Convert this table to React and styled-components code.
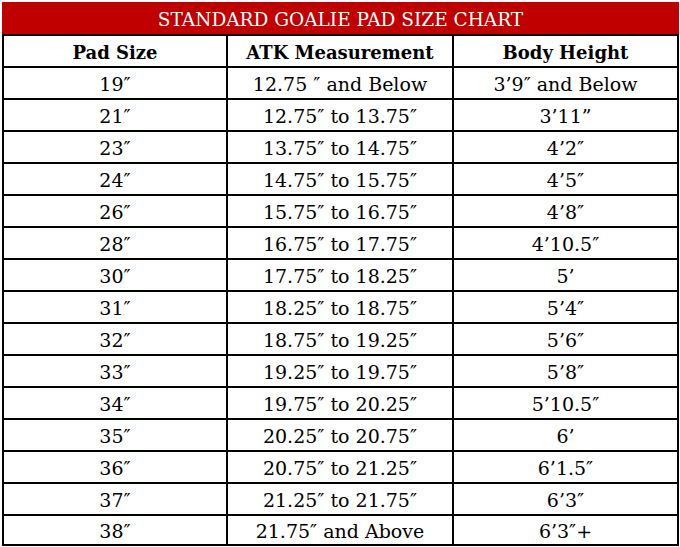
import React from "react";
import styled, { createGlobalStyle } from "styled-components";

const Global = createGlobalStyle`
  html, body { margin: 0; padding: 0; background: #fff; }
  body { font-family: "DejaVu Serif", "Liberation Serif", serif; color: #000; }
`;

const Page = styled.div`
  padding: 2px 0 0 2px;
`;

const Chart = styled.div`
  width: 677px;
`;

const TitleBar = styled.div`
  height: 32px;
  background: #c00000;
  color: #fff;
  display: flex;
  align-items: center;
  justify-content: center;
  font-size: 18.5px;
  padding-top: 2px;
  box-sizing: border-box;
`;

const Grid = styled.div`
  display: grid;
  grid-template-columns: 222px 224px 223px;
  column-gap: 2px;
  row-gap: 2px;
  background: #000;
  border: 2px solid #000;
`;

const Cell = styled.div`
  background: #fff;
  height: ${(p) => (p.$last ? 28 : 30)}px;
  display: flex;
  align-items: center;
  justify-content: center;
  font-size: ${(p) => (p.$head ? 18 : 19)}px;
  font-weight: ${(p) => (p.$head ? 700 : 400)};
  padding-top: 2px;
  box-sizing: border-box;
  white-space: nowrap;
`;

const rows = [
  ["19″", "12.75 ″ and Below", "3’9″ and Below"],
  ["21″", "12.75″ to 13.75″", "3’11”"],
  ["23″", "13.75″ to 14.75″", "4’2″"],
  ["24″", "14.75″ to 15.75″", "4’5″"],
  ["26″", "15.75″ to 16.75″", "4’8″"],
  ["28″", "16.75″ to 17.75″", "4’10.5″"],
  ["30″", "17.75″ to 18.25″", "5’"],
  ["31″", "18.25″ to 18.75″", "5’4″"],
  ["32″", "18.75″ to 19.25″", "5’6″"],
  ["33″", "19.25″ to 19.75″", "5’8″"],
  ["34″", "19.75″ to 20.25″", "5’10.5″"],
  ["35″", "20.25″ to 20.75″", "6’"],
  ["36″", "20.75″ to 21.25″", "6’1.5″"],
  ["37″", "21.25″ to 21.75″", "6’3″"],
  ["38″", "21.75″ and Above", "6’3″+"],
];

export default function App() {
  return (
    <Page>
      <Global />
      <Chart>
        <TitleBar>STANDARD GOALIE PAD SIZE CHART</TitleBar>
        <Grid>
          <Cell $head>Pad Size</Cell>
          <Cell $head>ATK Measurement</Cell>
          <Cell $head>Body Height</Cell>
          {rows.map((r, i) =>
            r.map((t, j) => (
              <Cell key={`${i}-${j}`} $last={i === rows.length - 1}>
                {t}
              </Cell>
            ))
          )}
        </Grid>
      </Chart>
    </Page>
  );
}
